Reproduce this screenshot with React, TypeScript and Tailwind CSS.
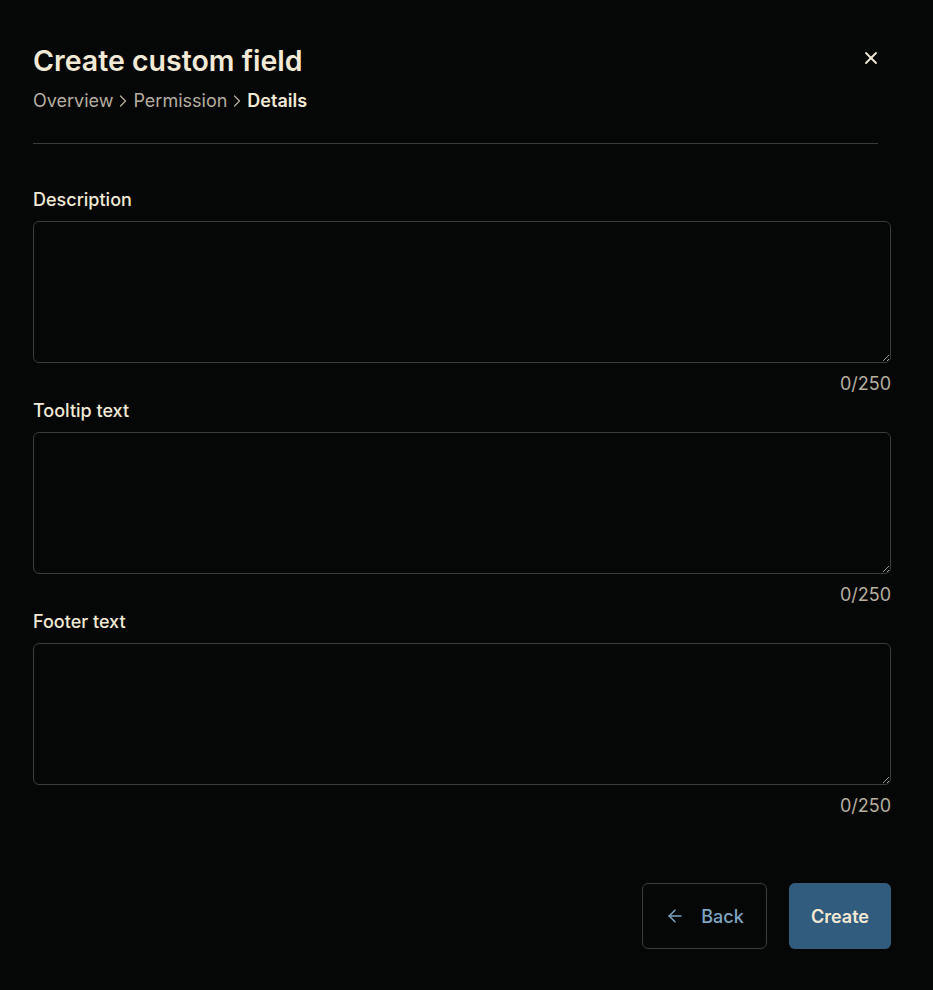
import { X, ArrowLeft, ChevronRight } from "lucide-react";

const fields = ["Description", "Tooltip text", "Footer text"];

export default function App() {
  return (
    <div
      className="min-h-[990px] w-full bg-[#050707] text-[#f3ead6]"
      style={{ fontFamily: "Inter, 'Noto Sans', sans-serif" }}
    >
      <div className="pl-[33px] pr-[42px] pt-[43px]">
        <div className="flex items-start justify-between pr-[13px]">
          <div>
            <h1 className="text-[28.5px] font-semibold leading-[36px]">Create custom field</h1>
            <div className="mt-[10px] flex items-center text-[18px] leading-[24px] text-[#b6ae9f]">
              <span>Overview</span>
              <ChevronRight size={20} strokeWidth={1.5} />
              <span>Permission</span>
              <ChevronRight size={20} strokeWidth={1.5} />
              <span className="font-semibold text-[#f3ead6]">Details</span>
            </div>
          </div>
          <button className="mt-[5px] mr-[-3px] text-[#f3ead6]">
            <X size={20} strokeWidth={2.2} />
          </button>
        </div>
        <div className="mt-[30px] mr-[13px] h-px bg-[#3a3a38]" />

        <div className="mt-[44px] flex flex-col">
          {fields.map((f) => (
            <div key={f} className="mb-[3px]">
              <label className="block text-[18px] font-medium leading-[24px]">{f}</label>
              <textarea className="mt-[9px] block h-[142px] w-full rounded-[6px] border border-[#3c3c3a] bg-[#050707] p-3 text-[#f3ead6] outline-none" />
              <div className="mt-[9px] text-right text-[18px] leading-[24px] text-[#b6ae9f]">0/250</div>
            </div>
          ))}
        </div>

        <div className="mt-[62px] flex justify-end gap-[22px]">
          <button className="flex h-[66px] w-[125px] items-center justify-center gap-[16px] rounded-[6px] border border-[#3c3c3a] text-[18px] font-medium text-[#7ea6c3]">
            <ArrowLeft size={20} strokeWidth={1.8} />
            Back
          </button>
          <button className="h-[66px] w-[102px] rounded-[6px] bg-[#325c7d] text-[18px] font-semibold text-[#f3ead6]">
            Create
          </button>
        </div>
      </div>
    </div>
  );
}
